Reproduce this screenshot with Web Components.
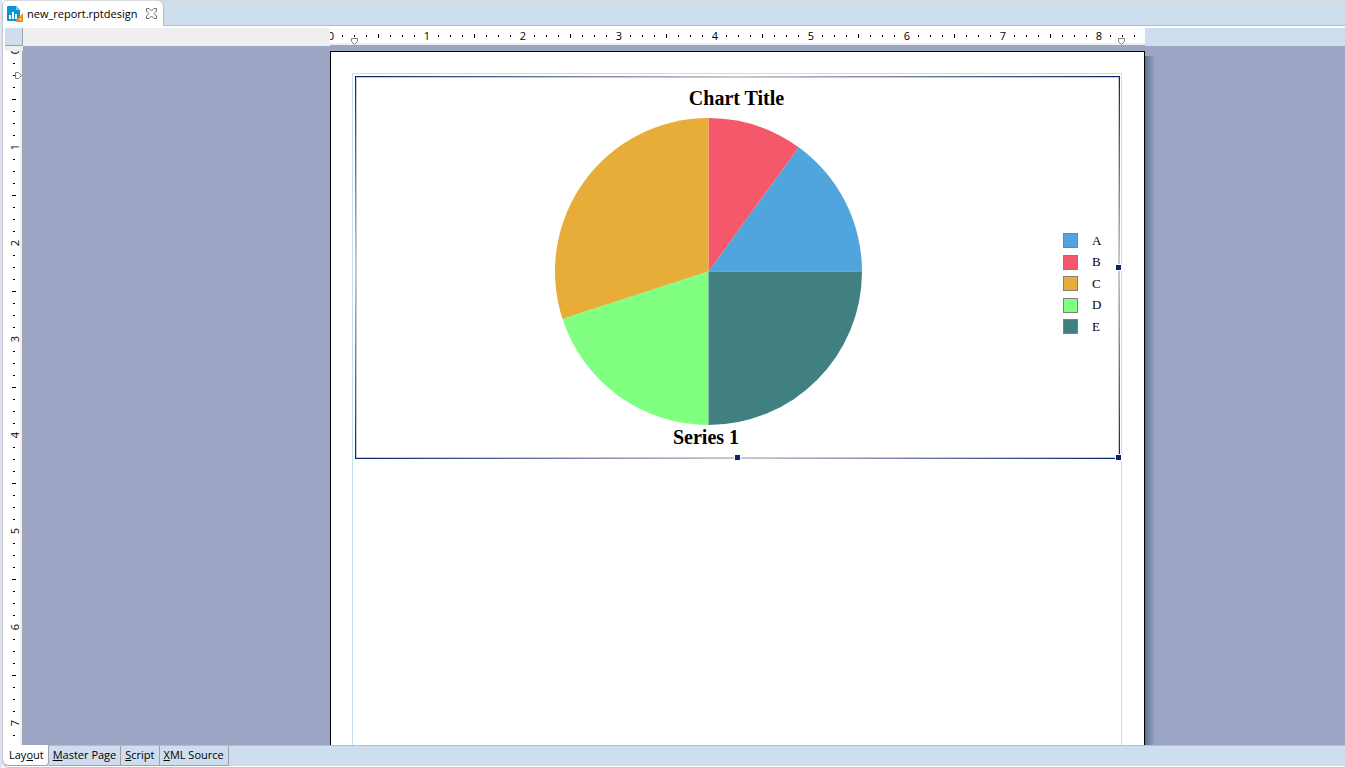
<!DOCTYPE html>
<html lang="en">
<head>
<meta charset="utf-8">
<title>new_report.rptdesign</title>
<style>
html, body { margin: 0; height: 100%; }
body { font: 12px/16px "Open Sans", "Noto Sans", sans-serif; color: #000; overflow: hidden; }
</style>
</head>
<body>
<report-editor></report-editor>
<script>
const define = (name, html, setup) => customElements.define(name, class extends HTMLElement {
  constructor() {
    super();
    this.attachShadow({ mode: 'open' }).innerHTML = html;
  }
  connectedCallback() { if (setup) setup(this, this.shadowRoot); }
});

define('file-tab', `
<style>
:host { display: flex; height: 26px; box-sizing: border-box; background: #cfdeee; border-bottom: 1px solid #b5bccb; border-top: 1px solid #d6d9de; }
.tab { display: flex; align-items: center; gap: 4px; height: 25px; padding: 0 6px 0 4px; background: #fff; border-right: 1px solid #b5bccb; border-radius: 4px 6px 0 0; font-size: 11px; box-sizing: border-box; }
button { display: block; border: 0; padding: 0; margin-left: 5px; width: 11px; height: 11px; background: none; }
svg { display: block; }
</style>
<div class="tab">
  <svg width="16" height="16" viewBox="0 0 16 16" aria-hidden="true">
    <path d="M1 0h8l4 4v10a1 1 0 0 1-1 1H1a1 1 0 0 1-1-1V1a1 1 0 0 1 1-1z" fill="#0a94d6"/>
    <path d="M9 0l4 4H9z" fill="#7cc8ec"/>
    <path d="M2 9h2v4H2zM5 6h2v7H5zM8 8h2v5H8z" fill="#fff"/>
    <path d="M16 7v9H8z" fill="#fff"/><path d="M16 7v9H8z" fill="#f58a1f"/><path d="M14 12v2h-2z" fill="#fff"/>
  </svg>
  <span><slot></slot></span>
  <button aria-label="Close"><svg width="11" height="11" viewBox="0 0 11 11"><path d="M.5.5h2.5l2.5 2.5 2.5-2.5h2.5v2.5l-2.5 2.5 2.5 2.5v2.5h-2.5l-2.5-2.5-2.5 2.5h-2.5v-2.5l2.5-2.5-2.5-2.5z" fill="#fff" stroke="#6d6d6d"/></svg></button>
</div>`);

define('inch-ruler', `
<style>
:host { display: block; position: relative; overflow: hidden; background: #fff; box-sizing: border-box; font: 11px/12px "Open Sans", "Noto Sans", sans-serif; }
:host([axis="x"]) { height: 18px; border-bottom: 1px solid #a5a5ad; box-shadow: inset 0 -2px #efefef; }
:host([axis="y"]) { width: 18px; border-right: 1px solid #a5a5ad; box-shadow: inset -2px 0 #efefef; }
.marks { display: flex; }
.marks span { flex: none; width: 12px; height: 12px; display: grid; place-items: center; }
i { width: 1px; height: 2px; margin-right: 1px; background: #000; }
i.half { height: 4px; }
:host([axis="x"]) .marks { margin: 2px 0 0 -5px; }
:host([axis="y"]) .marks { flex-direction: column; margin: -6px 0 0 3px; }
:host([axis="y"]) .marks span { transform: rotate(-90deg); }
:host([axis="y"]) .num { padding-top: 1px; box-sizing: border-box; }
svg { position: absolute; }
:host([axis="x"]) svg { top: 10px; }
:host([axis="x"]) .start { left: 21px; }
:host([axis="x"]) .end { right: 20px; }
:host([axis="y"]) svg { left: 10px; top: 21px; transform: rotate(-90deg); }
:host([axis="y"]) .end { display: none; }
</style>
<div class="marks"></div>
<svg class="start" width="7" height="7" viewBox="0 0 7 7"><path d="M.5.5h6v3l-3 3-3-3z" fill="#fff" stroke="#808080"/></svg>
<svg class="end" width="7" height="7" viewBox="0 0 7 7"><path d="M.5.5h6v3l-3 3-3-3z" fill="#fff" stroke="#808080"/></svg>`,
(host, root) => {
  const last = Number(host.getAttribute('eighths'));
  let out = '';
  for (let n = 0; n <= last; n++) {
    out += n % 8 === 0 ? `<span class="num">${n / 8}</span>` : `<span><i class="${n % 4 === 0 ? 'half' : ''}"></i></span>`;
  }
  root.querySelector('.marks').innerHTML = out;
});

define('pie-chart', `
<style>
:host { display: block; position: relative; box-sizing: border-box; padding: 1px; font-family: "Liberation Serif", serif;
  --h: linear-gradient(90deg, #0a246a, #c8c8d0 50%, #0a246a);
  --v: linear-gradient(#0a246a, #c8c8d0 50%, #0a246a);
  background: var(--h) top / 100% 1px no-repeat, var(--h) bottom / 100% 1px no-repeat, var(--v) left / 1px 100% no-repeat, var(--v) right / 1px 100% no-repeat; }
figure { margin: 0; border: 1px solid #c8c8d0; height: 381px; box-sizing: border-box; display: flex; flex-direction: column; }
h1, figcaption { margin: 0; font-size: 20px; line-height: 24px; font-weight: bold; text-align: center; }
h1 { padding: 8px 2px 8px 0; }
.plot { display: flex; align-items: center; }
.pie { flex: 1; display: flex; flex-direction: column; align-items: center; padding-right: 4px; }
figcaption { padding-right: 4px; }
svg { display: block; }
ul { list-style: none; margin: 0 16px 0 0; padding: 0; display: flex; flex-direction: column; justify-content: space-between; height: 102px; font-size: 13px; line-height: 16px; }
li { display: flex; align-items: center; gap: 14px; height: 16px; }
li b { width: 15px; height: 15px; box-sizing: border-box; border: 1px solid #808080; }
.key { width: 10px; }
.grip { position: absolute; width: 5px; height: 5px; box-sizing: content-box; border: 1px solid #fff; background: #0a246a; }
.e { right: -2px; top: calc(50% - 4px); } .s { bottom: -2px; left: calc(50% - 4px); } .se { right: -2px; bottom: -2px; }
</style>
<figure>
  <h1>Chart Title</h1>
  <div class="plot">
    <div class="pie">
      <svg width="307" height="307" viewBox="-153.5 -153.5 307 307" role="img" aria-label="Pie chart"></svg>
      <figcaption>Series 1</figcaption>
    </div>
    <ul></ul>
  </div>
</figure>
<span class="grip e"></span><span class="grip s"></span><span class="grip se"></span>`,
(host, root) => {
  const R = 153.5;
  const slices = [['A', '#50a5dc', 36, 90], ['B', '#f4586a', 0, 36], ['C', '#e8ac39', 252, 360], ['D', '#80ff80', 180, 252], ['E', '#408080', 90, 180]];
  const at = deg => { const a = deg * Math.PI / 180; return `${R * Math.sin(a)} ${-R * Math.cos(a)}`; };
  root.querySelector('[role=img]').innerHTML = slices.map(([, fill, from, to]) =>
    `<path d="M0 0L${at(from)}A${R} ${R} 0 0 1 ${at(to)}z" fill="${fill}"/>`).join('');
  root.querySelector('ul').innerHTML = slices.map(([name, fill]) =>
    `<li><b style="background:${fill}"></b><span class="key">${name}</span></li>`).join('');
});

define('report-page', `
<style>
:host { display: block; box-sizing: border-box; border: 1px solid #000; border-bottom: 0; background: #fff; padding: 21px 22px 0 21px; position: relative; }
:host::after { content: ""; position: absolute; left: calc(100% + 1px); top: 4px; bottom: 0; width: 10px; background: linear-gradient(90deg, #5d7293, #9ca5c3); }
.margins { height: 100%; box-sizing: border-box; border: 1px solid #c5dff0; border-bottom: 0; padding: 2px 1px 0 2px; }
</style>
<div class="margins"><slot></slot></div>`);

define('page-tabs', `
<style>
:host { display: flex; height: 21px; box-sizing: border-box; background: #cfdeee; border-top: 1px solid #b5bccb; font-size: 11px; line-height: 18px; }
nav { display: flex; height: 20px; }
a { color: inherit; text-decoration: none; padding: 0 4px; border: solid #a0a0a0; border-width: 0 1px 1px 0; box-sizing: border-box; }
a.on { background: #fff; margin-top: -1px; line-height: 20px; padding: 0 4px 0 6px; border-radius: 0 0 4px 6px; }
</style>
<nav>
<a class="on" href="#layout">Lay<u>o</u>ut</a><a href="#master"><u>M</u>aster Page</a><a href="#script"><u>S</u>cript</a><a href="#xml"><u>X</u>ML Source</a>
</nav>`);

define('report-editor', `
<style>
:host { display: flex; flex-direction: column; height: 100%; box-sizing: border-box; border-left: 2px solid #dfe4f3; background: #fff; --cols: 307fr 815px 200fr; }
.frame { flex: 1; min-height: 0; display: flex; flex-direction: column; border-left: 1px solid #c4c6cc; border-bottom: 1px solid #c8c8c8; padding-bottom: 1px; border-radius: 5px 0 0 6px; overflow: hidden; }
.grid { flex: 1; min-height: 0; display: grid; grid-template: 18px minmax(0, 1fr) / 18px minmax(0, 1fr); padding: 2px 0 0 2px; }
.corner { background: #cfdeee; border: solid #a0a0a8; border-width: 0 1px 1px 0; }
.top { display: grid; grid-template-columns: var(--cols); background: linear-gradient(90deg, #efefef 50%, #cfdeee 50%); }
.left { display: flex; flex-direction: column; background: #efefef; padding-top: 5px; min-height: 0; }
.left inch-ruler { flex: 1; min-height: 0; }
.desk { display: grid; grid-template: minmax(0, 1fr) / var(--cols); background: #9ca5c3; padding-top: 5px; overflow: hidden; }
report-page { grid-column: 2; }
.top inch-ruler { grid-column: 2; }
</style>
<div class="frame">
  <file-tab>new_report.rptdesign</file-tab>
  <div class="grid">
    <div class="corner"></div>
    <div class="top"><inch-ruler axis="x" eighths="67"></inch-ruler></div>
    <div class="left"><inch-ruler axis="y" eighths="63"></inch-ruler></div>
    <div class="desk"><report-page><pie-chart></pie-chart></report-page></div>
  </div>
  <page-tabs></page-tabs>
</div>`);
</script>
</body>
</html>
